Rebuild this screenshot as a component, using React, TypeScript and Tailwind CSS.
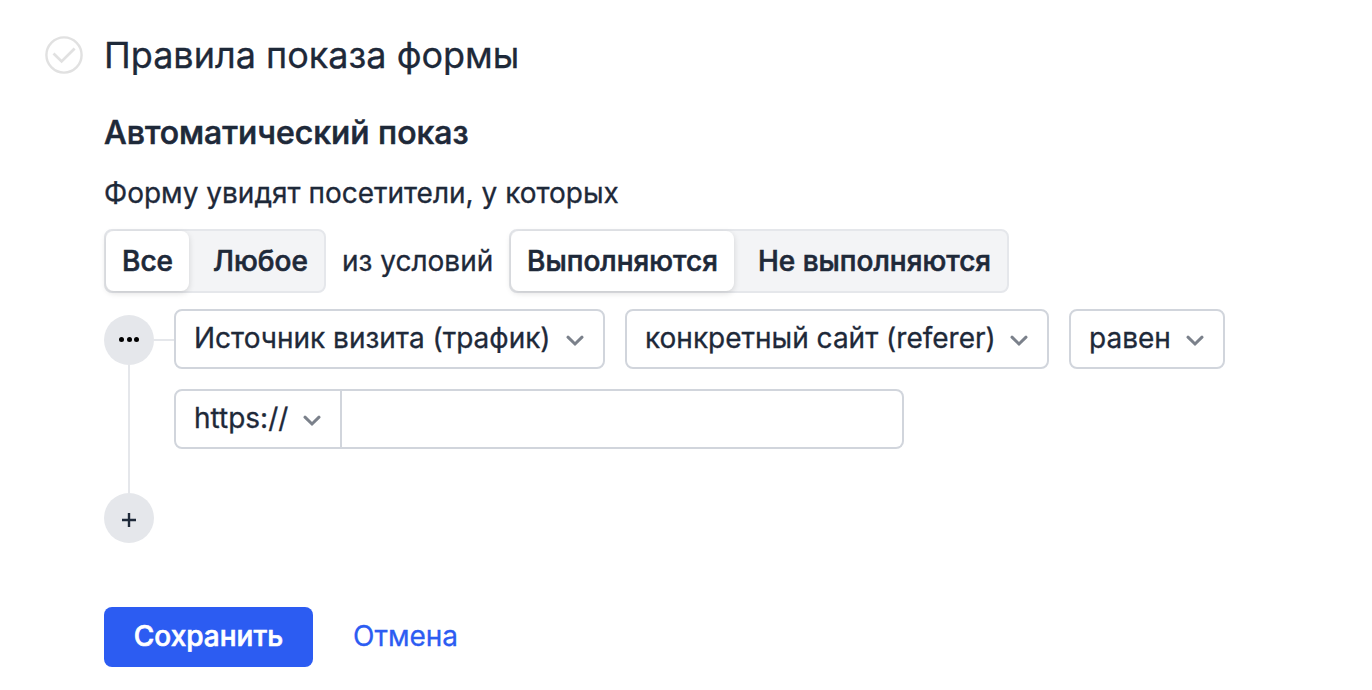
import { useState, type FC } from "react";
import clsx from "clsx";

const CheckIcon: FC = () => (
  <svg className="size-[38px]" viewBox="0 0 38 38" fill="none" stroke="#e1e1e1">
    <circle cx="19" cy="19" r="17.6" strokeWidth="2.4" />
    <path d="M8.5 17.4 L16.6 25.4 L29.6 12.4" strokeWidth="2.8" />
  </svg>
);

const ChevronIcon: FC = () => (
  <svg
    className="h-3 w-[18px] shrink-0"
    viewBox="0 0 18 12"
    fill="none"
    stroke="#7b818b"
    strokeWidth="3"
    strokeLinecap="round"
  >
    <path d="M2 2.2 L9 9 L16 2.2" strokeLinejoin="miter" />
  </svg>
);

type SegmentedProps = {
  options: { label: string; width: string }[];
  className: string;
};

// переключатель из двух вариантов
const Segmented: FC<SegmentedProps> = ({ options, className }) => {
  const [active, setActive] = useState(0);

  return (
    <div className={clsx("flex h-16 rounded-lg border-2 border-gray-200 bg-gray-100", className)}>
      {options.map((option, i) => (
        <button
          key={option.label}
          onClick={() => setActive(i)}
          className={clsx(
            "h-[60px] cursor-pointer rounded-lg font-medium whitespace-nowrap [-webkit-text-stroke:0.6px]",
            option.width,
            active === i && "bg-white shadow-[0_2px_6px_rgba(0,0,0,0.14)]"
          )}
        >
          {option.label}
        </button>
      ))}
    </div>
  );
};

const Select: FC<{ label: string; className: string }> = ({ label, className }) => (
  <button
    className={clsx(
      "flex h-[60px] cursor-pointer items-center justify-between border-2 border-gray-300 bg-white pr-[19px] pb-0.5 pl-[18px] whitespace-nowrap",
      className
    )}
  >
    <span>{label}</span>
    <span className="pt-1.5">
      <ChevronIcon />
    </span>
  </button>
);

const App: FC = () => {
  const [site, setSite] = useState("");

  return (
    <div className="flex h-[690px] w-full gap-[21px] overflow-hidden bg-white pl-[45px] font-['Inter','Liberation_Sans',sans-serif] text-[28px] leading-10 text-gray-800 [-webkit-text-stroke:0.3px]">
      <div className="pt-9">
        <CheckIcon />
      </div>

      <div className="flex flex-col items-start">
        <h1 className="mt-[31px] text-4xl leading-12 whitespace-nowrap">Правила показа формы</h1>
        <h2 className="mt-[34px] text-[32px] leading-10 font-medium whitespace-nowrap [-webkit-text-stroke:0.6px]">
          Автоматический показ
        </h2>
        <p className="mt-5 whitespace-nowrap">Форму увидят посетители, у которых</p>

        <div className="mt-4 flex items-center gap-4">
          <Segmented
            className="w-[222px]"
            options={[
              { label: "Все", width: "w-[83px]" },
              { label: "Любое", width: "w-[135px] pl-2" },
            ]}
          />
          <span className="w-[151px] whitespace-nowrap">из условий</span>
          <Segmented
            className="w-[500px]"
            options={[
              { label: "Выполняются", width: "w-[223px]" },
              { label: "Не выполняются", width: "w-[273px] pl-2" },
            ]}
          />
        </div>

        {/* дерево условий */}
        <div className="mt-4 flex">
          <div className="flex w-[50px] flex-col items-center pt-1.5">
            <button className="flex size-[50px] cursor-pointer items-center justify-center gap-[2.5px] rounded-full bg-gray-200 pb-px">
              <i className="size-[5px] rounded-full bg-black" />
              <i className="size-[5px] rounded-full bg-black" />
              <i className="size-[5px] rounded-full bg-black" />
            </button>
            <div className="h-32 w-0.5 bg-gray-200" />
            <button className="flex size-[50px] cursor-pointer items-center justify-center rounded-full bg-gray-200 pt-1">
              <svg className="size-3.5" viewBox="0 0 14 14" stroke="#1e2939" strokeWidth="2.4">
                <path d="M7 0 V14 M0 7 H14" />
              </svg>
            </button>
          </div>
          <div className="mt-[30px] h-0.5 w-5 bg-gray-200" />
          <div className="flex flex-col gap-5">
            <div className="flex gap-5">
              <Select label="Источник визита (трафик)" className="w-[431px] rounded-lg" />
              <Select label="конкретный сайт (referer)" className="w-[424px] rounded-lg" />
              <Select label="равен" className="w-[156px] rounded-lg" />
            </div>
            <div className="flex">
              <Select label="https://" className="w-[168px] rounded-l-lg" />
              <input
                type="text"
                value={site}
                onChange={(e) => setSite(e.target.value)}
                className="h-[60px] w-[562px] rounded-r-lg border-2 border-l-0 border-gray-300 px-[18px] outline-none"
              />
            </div>
          </div>
        </div>

        <div className="mt-16 flex items-center gap-10">
          <button className="h-[60px] w-[209px] cursor-pointer rounded-lg bg-[#2c5cf2] pb-0.5 font-medium text-white [-webkit-text-stroke:0.6px]">
            Сохранить
          </button>
          <button className="cursor-pointer pb-0.5 text-[#2c5cf2]">Отмена</button>
        </div>
      </div>
    </div>
  );
};

export default App;
